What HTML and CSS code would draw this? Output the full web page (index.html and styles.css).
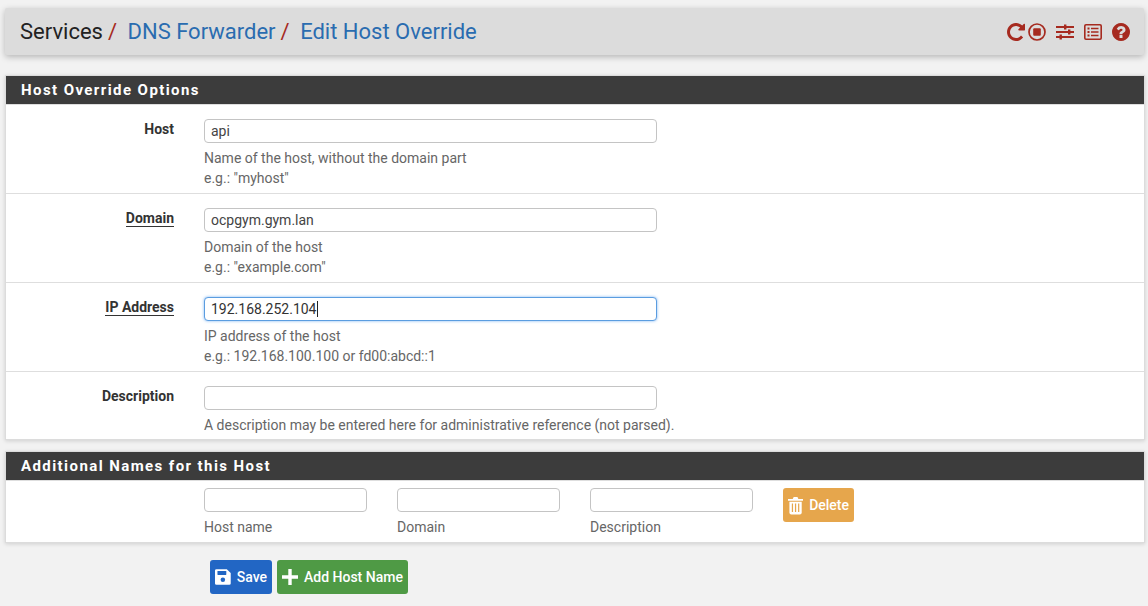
FILE: index.html
```html
<!DOCTYPE html>
<html lang="en">
<head>
    <meta charset="UTF-8">
    <title>Edit Host Override</title>
    <link rel="stylesheet" href="styles.css">
</head>
<body>

    <!-- Breadcrumb bar -->
    <div class="crumb-bar">
        <div class="crumbs">
            <span class="crumb">Services</span><span class="sep">/</span>
            <a class="crumb link">DNS Forwarder</a><span class="sep">/</span>
            <a class="crumb link">Edit Host Override</a>
        </div>
        <div class="crumb-icons">
            <svg class="icon-reload" width="18" height="18" viewBox="128 128 1536 1536"><path d="M1664 256v448q0 26-19 45t-45 19h-448q-42 0-59-40-17-39 14-69l138-138q-148-137-349-137-104 0-198.500 40.500t-163.500 109.500-109.500 163.500-40.500 198.500 40.500 198.500 109.500 163.500 163.500 109.500 198.500 40.500q119 0 225-52t179-147q7-10 23-12 15 0 25 9l137 137q9 8 9.500 20.500t-7.500 22.500q-109 132-264 204.500t-327 72.500q-156 0-298-61t-245-164-164-245-61-298 61-298 164-245 245-164 298-61q147 0 284.500 55.500t244.500 156.500l130-129q29-31 70-14 39 17 39 59z" fill="#a62a1f"/></svg>
            <svg width="18" height="18" viewBox="0 0 18 18"><circle cx="9" cy="9" r="8" fill="none" stroke="#a62a1f" stroke-width="1.700"/><rect x="5.200" y="5.200" width="7.600" height="7.600" rx="1" fill="#a62a1f"/></svg>
            <svg width="18" height="16" viewBox="0 0 18 16"><path d="M0 3h18M0 8h18M0 13h18" stroke="#a62a1f" stroke-width="2"/><path d="M8 .5h2.400v5H8zM12 5.500h2.400v5H12zM3.500 10.500h2.400v5H3.500z" fill="#a62a1f"/></svg>
            <svg width="18" height="16" viewBox="0 0 18 16"><rect x=".8" y=".8" width="16.400" height="14.400" rx="1.200" fill="none" stroke="#a62a1f" stroke-width="1.600"/><path d="M3.500 3.500h2v2h-2zM3.500 7h2v2h-2zM3.500 10.500h2v2h-2zM7 3.700h7.500v1.600H7zM7 7.200h7.500v1.600H7zM7 10.700h7.500v1.600H7z" fill="#a62a1f"/></svg>
            <svg width="18" height="18" viewBox="128 128 1536 1536"><path d="M1024 1376v-192q0-14-9-23t-23-9h-192q-14 0-23 9t-9 23v192q0 14 9 23t23 9h192q14 0 23-9t9-23zm256-672q0-88-55.500-163t-138.500-116-170-41q-243 0-371 213-15 24 8 42l132 100q7 6 19 6 16 0 25-12 53-68 86-92 34-24 86-24 48 0 85.500 26t37.500 59q0 38-20 61t-68 45q-63 28-115.500 86.500t-52.500 125.500v36q0 14 9 23t23 9h192q14 0 23-9t9-23q0-19 21.500-49.500t54.500-49.500q32-18 49-28.500t46-35 44.500-48 28-60.500 12.500-81zm384 192q0 209-103 385.500t-279.500 279.500-385.500 103-385.500-103-279.500-279.500-103-385.500 103-385.500 279.500-279.500 385.500-103 385.500 103 279.500 279.500 103 385.500z" fill="#a62a1f"/></svg>
        </div>
    </div>

    <!-- Host Override Options -->
    <div class="panel">
        <div class="panel-heading">Host Override Options</div>
        <div class="form-row">
            <label class="row-label">Host</label>
            <div class="row-field">
                <input class="text-input" type="text" value="api">
                <p class="help">Name of the host, without the domain part<br>e.g.: "myhost"</p>
            </div>
        </div>
        <div class="form-row">
            <label class="row-label"><span class="required">Domain</span></label>
            <div class="row-field">
                <input class="text-input" type="text" value="ocpgym.gym.lan">
                <p class="help">Domain of the host<br>e.g.: "example.com"</p>
            </div>
        </div>
        <div class="form-row">
            <label class="row-label"><span class="required">IP Address</span></label>
            <div class="row-field">
                <div class="text-input focused">192.168.252.104<span class="caret"></span></div>
                <p class="help">IP address of the host<br>e.g.: 192.168.100.100 or fd00:abcd::1</p>
            </div>
        </div>
        <div class="form-row last">
            <label class="row-label">Description</label>
            <div class="row-field">
                <input class="text-input" type="text">
                <p class="help">A description may be entered here for administrative reference (not parsed).</p>
            </div>
        </div>
    </div>

    <!-- Additional Names -->
    <div class="panel second">
        <div class="panel-heading">Additional Names for this Host</div>
        <div class="names-row">
            <div class="name-col">
                <input class="text-input" type="text">
                <p class="help">Host name</p>
            </div>
            <div class="name-col">
                <input class="text-input" type="text">
                <p class="help">Domain</p>
            </div>
            <div class="name-col">
                <input class="text-input" type="text">
                <p class="help">Description</p>
            </div>
            <button class="btn btn-delete">
                <svg width="16" height="19" viewBox="0 0 16 19"><path d="M0 2.600h5L6 .6h4l1 2h5v2H0z" fill="#fff"/><path d="M1.500 5.500h13V17a2 2 0 0 1-2 2h-9a2 2 0 0 1-2-2z" fill="#fff"/><path d="M4.700 7.500v9M8 7.500v9M11.300 7.500v9" stroke="#e6a64c" stroke-width="1.300"/></svg>
                Delete
            </button>
        </div>
    </div>

    <div class="actions">
        <button class="btn btn-save">
            <svg width="16" height="16" viewBox="0 0 16 16"><path d="M1.500 0H12l4 4v10.500a1.500 1.500 0 0 1-1.500 1.500h-13A1.500 1.500 0 0 1 0 14.500v-13A1.500 1.500 0 0 1 1.500 0z" fill="#fff"/><rect x="2.500" y="2" width="9" height="4" rx=".5" fill="#2266c4"/><circle cx="8" cy="10.800" r="2.300" fill="#2266c4"/></svg>
            Save
        </button>
        <button class="btn btn-add">
            <svg width="16" height="16" viewBox="0 0 16 16"><path d="M6.300 0h3.400v6.300H16v3.400H9.700V16H6.300V9.700H0V6.300h6.300z" fill="#fff"/></svg>
            Add Host Name
        </button>
    </div>

</body>
</html>
```

FILE: styles.css
```css
/* Global Styles */
html, body {
    height: 100%;
}

body {
    font-family: Roboto, "Liberation Sans", sans-serif;
    font-size: 14px;
    margin: 0;
    padding: 8px 3px 0 5px;
    box-sizing: border-box;
    overflow: hidden;
    background: #f2f2f2;
    color: #333;
}

/* Breadcrumb bar */
.crumb-bar {
    height: 47px;
    margin-right: 1px;
    display: flex;
    align-items: center;
    justify-content: space-between;
    padding: 0 14px 0 15px;
    background: #dcdcdc;
    border-radius: 2px;
    box-shadow: 0 2px 6px rgba(0, 0, 0, 0.25);
}

.crumbs {
    font-size: 22px;
    display: flex;
    align-items: center;
}

.crumb {
    color: #222;
}

.crumb.link {
    color: #2a6cb0;
}

.sep {
    color: #a62a1f;
    margin: 0 10.5px 0 5px;
}

.crumb-icons {
    display: flex;
    align-items: center;
    gap: 10px;
}

.icon-reload {
    margin-right: -7px;
}

/* Panels */
.panel {
    margin-top: 20px;
    background: #fff;
    border: 1px solid #dcdcdc;
    box-shadow: 0 1px 4px rgba(0, 0, 0, 0.15);
}

.panel.second {
    margin-top: 11px;
}

.panel-heading {
    height: 28px;
    line-height: 28px;
    padding-left: 15px;
    background: #3c3c3c;
    color: #fff;
    font-size: 15px;
    font-weight: 700;
    letter-spacing: 1.42px;
}

/* Form rows */
.form-row {
    display: grid;
    grid-template-columns: 168px 453px;
    column-gap: 30px;
    height: 89px;
    box-sizing: border-box;
    padding-top: 14px;
    border-bottom: 1px solid #dedede;
}

.form-row:nth-child(2) {
    height: 90px;
    border-top: 1px solid #dedede;
}

.form-row.last {
    height: 67px;
    border-bottom: none;
}

.row-label {
    padding-top: 1px;
    text-align: right;
    font-weight: 700;
    font-size: 14px;
    line-height: 18px;
}

.required {
    border-bottom: 1px solid #333;
}

.text-input {
    display: block;
    box-sizing: border-box;
    width: 100%;
    height: 24px;
    padding: 0 6px;
    border: 1px solid #c4c4c4;
    border-radius: 4px;
    background: #fff;
    font-family: inherit;
    font-size: 14px;
    line-height: 22px;
    color: #444;
    outline: none;
}

.text-input.focused {
    border-color: #5b9de0;
    box-shadow: 0 0 3px rgba(70, 150, 240, 0.7);
    color: #333;
}

.caret {
    display: inline-block;
    width: 1px;
    height: 16px;
    background: #222;
    vertical-align: -3px;
}

.help {
    margin: 5px 0 0;
    font-size: 14px;
    line-height: 20px;
    color: #666;
    white-space: nowrap;
}

/* Additional names */
.names-row {
    display: flex;
    align-items: flex-start;
    gap: 30px;
    height: 62px;
    box-sizing: border-box;
    padding: 7px 0 0 198px;
    border-top: 1px solid #dedede;
}

.name-col {
    width: 163px;
}

/* Buttons */
.btn {
    display: inline-flex;
    align-items: center;
    gap: 6px;
    height: 34px;
    padding: 0 5px;
    border: none;
    border-radius: 3px;
    color: #fff;
    font-family: inherit;
    font-size: 14px;
    font-weight: 500;
}

.btn-delete {
    background: #e6a64c;
    width: 71px;
}

.btn-save {
    background: #2266c4;
    width: 62px;
}

.btn-add {
    background: #4f9a45;
    width: 131px;
}

.actions {
    display: flex;
    gap: 5px;
    margin-top: 17px;
    padding-left: 205px;
}
```
